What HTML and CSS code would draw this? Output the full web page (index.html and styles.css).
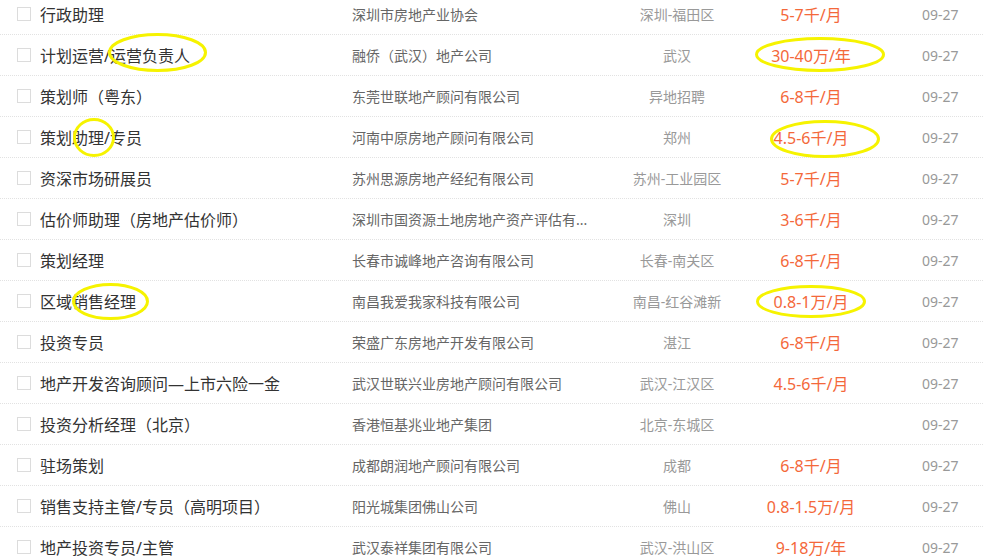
FILE: index.html
```html
<!DOCTYPE html>
<html lang="zh-CN">
<head>
  <meta charset="UTF-8" />
  <meta name="viewport" content="width=device-width, initial-scale=1" />
  <title>职位列表</title>
  <link rel="stylesheet" href="styles.css">
</head>
<body>

  <ul class="job-list">
    <li class="job">
      <span class="check"></span>
      <span class="title">行政助理</span>
      <span class="company">深圳市房地产业协会</span>
      <span class="place">深圳-福田区</span>
      <span class="salary">5-7千/月</span>
      <span class="date">09-27</span>
    </li>
    <li class="job">
      <span class="check"></span>
      <span class="title">计划运营/运营负责人</span>
      <span class="company">融侨（武汉）地产公司</span>
      <span class="place">武汉</span>
      <span class="salary">30-40万/年</span>
      <span class="date">09-27</span>
    </li>
    <li class="job">
      <span class="check"></span>
      <span class="title">策划师（粤东）</span>
      <span class="company">东莞世联地产顾问有限公司</span>
      <span class="place">异地招聘</span>
      <span class="salary">6-8千/月</span>
      <span class="date">09-27</span>
    </li>
    <li class="job">
      <span class="check"></span>
      <span class="title">策划助理/专员</span>
      <span class="company">河南中原房地产顾问有限公司</span>
      <span class="place">郑州</span>
      <span class="salary">4.5-6千/月</span>
      <span class="date">09-27</span>
    </li>
    <li class="job">
      <span class="check"></span>
      <span class="title">资深市场研展员</span>
      <span class="company">苏州思源房地产经纪有限公司</span>
      <span class="place">苏州-工业园区</span>
      <span class="salary">5-7千/月</span>
      <span class="date">09-27</span>
    </li>
    <li class="job">
      <span class="check"></span>
      <span class="title">估价师助理（房地产估价师）</span>
      <span class="company">深圳市国资源土地房地产资产评估有...</span>
      <span class="place">深圳</span>
      <span class="salary">3-6千/月</span>
      <span class="date">09-27</span>
    </li>
    <li class="job">
      <span class="check"></span>
      <span class="title">策划经理</span>
      <span class="company">长春市诚峰地产咨询有限公司</span>
      <span class="place">长春-南关区</span>
      <span class="salary">6-8千/月</span>
      <span class="date">09-27</span>
    </li>
    <li class="job">
      <span class="check"></span>
      <span class="title">区域销售经理</span>
      <span class="company">南昌我爱我家科技有限公司</span>
      <span class="place">南昌-红谷滩新</span>
      <span class="salary">0.8-1万/月</span>
      <span class="date">09-27</span>
    </li>
    <li class="job">
      <span class="check"></span>
      <span class="title">投资专员</span>
      <span class="company">荣盛广东房地产开发有限公司</span>
      <span class="place">湛江</span>
      <span class="salary">6-8千/月</span>
      <span class="date">09-27</span>
    </li>
    <li class="job">
      <span class="check"></span>
      <span class="title">地产开发咨询顾问—上市六险一金</span>
      <span class="company">武汉世联兴业房地产顾问有限公司</span>
      <span class="place">武汉-江汉区</span>
      <span class="salary">4.5-6千/月</span>
      <span class="date">09-27</span>
    </li>
    <li class="job">
      <span class="check"></span>
      <span class="title">投资分析经理（北京）</span>
      <span class="company">香港恒基兆业地产集团</span>
      <span class="place">北京-东城区</span>
      <span class="salary"></span>
      <span class="date">09-27</span>
    </li>
    <li class="job">
      <span class="check"></span>
      <span class="title">驻场策划</span>
      <span class="company">成都朗润地产顾问有限公司</span>
      <span class="place">成都</span>
      <span class="salary">6-8千/月</span>
      <span class="date">09-27</span>
    </li>
    <li class="job">
      <span class="check"></span>
      <span class="title">销售支持主管/专员（高明项目）</span>
      <span class="company">阳光城集团佛山公司</span>
      <span class="place">佛山</span>
      <span class="salary">0.8-1.5万/月</span>
      <span class="date">09-27</span>
    </li>
    <li class="job">
      <span class="check"></span>
      <span class="title">地产投资专员/主管</span>
      <span class="company">武汉泰祥集团有限公司</span>
      <span class="place">武汉-洪山区</span>
      <span class="salary">9-18万/年</span>
      <span class="date">09-27</span>
    </li>
  </ul>

  <!-- hand-drawn highlight marks -->
  <svg class="marks" width="983" height="558" viewBox="0 0 983 558">
    <ellipse cx="157.5" cy="52.5" rx="48" ry="18" />
    <ellipse cx="820" cy="54.5" rx="63.5" ry="16" />
    <ellipse cx="94" cy="137.5" rx="19.5" ry="18" />
    <ellipse cx="825" cy="139" rx="53.5" ry="17.5" />
    <ellipse cx="110.5" cy="301.5" rx="37" ry="17" />
    <ellipse cx="811" cy="301.5" rx="53.5" ry="15" />
  </svg>

</body>
</html>
```

FILE: styles.css
```css
:root {
  --title: #333;
  --company: #666;
  --muted: #999;
  --salary: #f4683a;
  --line: #e2e2e2;
}

* {
  box-sizing: border-box;
  margin: 0;
  padding: 0;
}

body {
  font-family: "Noto Sans", "Noto Sans CJK SC", sans-serif;
  background: #fff;
  color: var(--title);
  position: relative;
  width: 983px;
  height: 558px;
  overflow: hidden;
}

.job-list {
  list-style: none;
  margin-top: -6px;
}

.job {
  display: grid;
  grid-template-columns: 23px 312px 248px 154px 114px 1fr;
  align-items: center;
  height: 41px;
  padding-left: 17px;
  border-bottom: 1px dotted var(--line);
  white-space: nowrap;
}

.check {
  width: 14px;
  height: 14px;
  border: 1px solid #dcdcdc;
  background: #fff;
}

.title {
  font-size: 16px;
  color: var(--title);
}

.company {
  font-size: 14px;
  color: var(--company);
  overflow: hidden;
}

.place {
  font-size: 14px;
  color: var(--muted);
  text-align: center;
}

.salary {
  font-size: 16px;
  color: var(--salary);
  text-align: center;
}

.date {
  font-size: 14px;
  color: var(--muted);
  padding-left: 54px;
}

.marks {
  position: absolute;
  top: 0;
  left: 0;
  pointer-events: none;
}

.marks ellipse {
  fill: none;
  stroke: #f6f300;
  stroke-width: 3;
}
```
